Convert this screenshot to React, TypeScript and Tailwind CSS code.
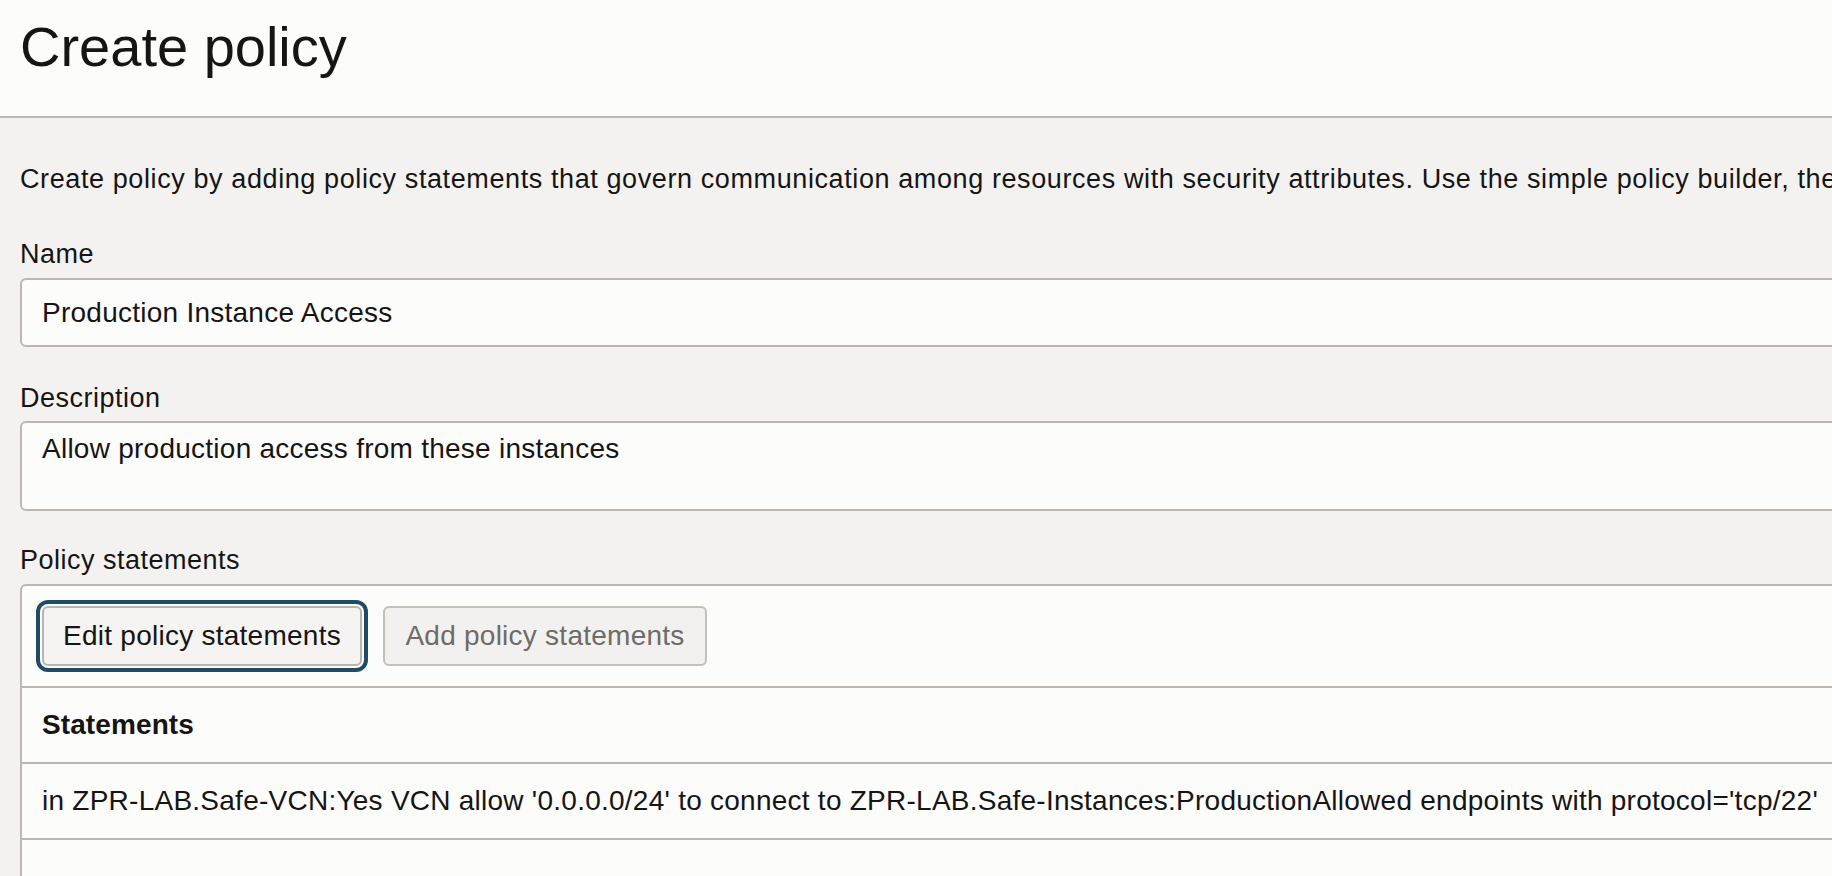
export default function App() {
  return (
    <div className="h-screen w-screen overflow-hidden bg-[#f3f2f1] text-[#161513] font-['Liberation_Sans',Arial,sans-serif]">
      <header className="h-[118px] w-[2400px] border-b-2 border-[#bcb7b0] bg-[#fcfcfb] pl-[20px] pt-[15px]">
        <h1 className="whitespace-nowrap text-[56px] font-normal leading-[64px]">Create policy</h1>
      </header>
      <main className="w-[2400px] px-[20px] pt-[43px]">
        <p className="whitespace-nowrap text-[27px] leading-[36px] tracking-[0.6px]">
          Create policy by adding policy statements that govern communication among resources with security attributes. Use the simple policy builder, the
        </p>

        <div className="mt-[39px]">
          <label className="block text-[27px] leading-[36px] tracking-[0.5px]">Name</label>
          <div className="mt-[6px] flex h-[69px] items-center rounded-l-[6px] border-2 border-[#bcb7b0] bg-[#fcfcfb] pl-[20px] text-[28px] tracking-[0.25px]">
            Production Instance Access
          </div>
        </div>

        <div className="mt-[33px]">
          <label className="block text-[27px] leading-[36px] tracking-[0.5px]">Description</label>
          <div className="mt-[5px] h-[90px] rounded-l-[6px] border-2 border-[#bcb7b0] bg-[#fcfcfb] pl-[20px] pt-[8px] text-[28px] leading-[36px] tracking-[0.25px]">
            Allow production access from these instances
          </div>
        </div>

        <div className="mt-[31px]">
          <label className="block text-[27px] leading-[36px] tracking-[0.5px]">Policy statements</label>
          <div className="mt-[6px] h-[400px] rounded-tl-[6px] border-2 border-[#bcb7b0] bg-[#fcfcfb]">
            <div className="flex items-center gap-[21px] border-b-2 border-[#bcb7b0] px-[20px] py-[20px]">
              <button className="flex h-[60px] w-[320px] items-center justify-center rounded-[6px] border-2 border-[#b9b4ae] bg-[#f5f4f2] text-[28px] tracking-[0.25px] text-[#161513] shadow-[0_0_0_2px_#fcfcfb,0_0_0_6px_#1f4b66]">
                Edit policy statements
              </button>
              <button className="flex h-[60px] w-[324px] items-center justify-center rounded-[6px] border-2 border-[#c3bfb9] bg-[#f2f1ef] text-[28px] tracking-[0.25px] text-[#6f6b67]">
                Add policy statements
              </button>
            </div>
            <div className="flex h-[76px] items-center border-b-2 border-[#bcb7b0] px-[20px] text-[28px] font-bold tracking-[0.1px]">
              Statements
            </div>
            <div className="flex h-[76px] items-center whitespace-nowrap border-b-2 border-[#bcb7b0] px-[20px] text-[28px] tracking-[0.25px]">
              in ZPR-LAB.Safe-VCN:Yes VCN allow '0.0.0.0/24' to connect to ZPR-LAB.Safe-Instances:ProductionAllowed endpoints with protocol='tcp/22'
            </div>
          </div>
        </div>
      </main>
    </div>
  );
}
